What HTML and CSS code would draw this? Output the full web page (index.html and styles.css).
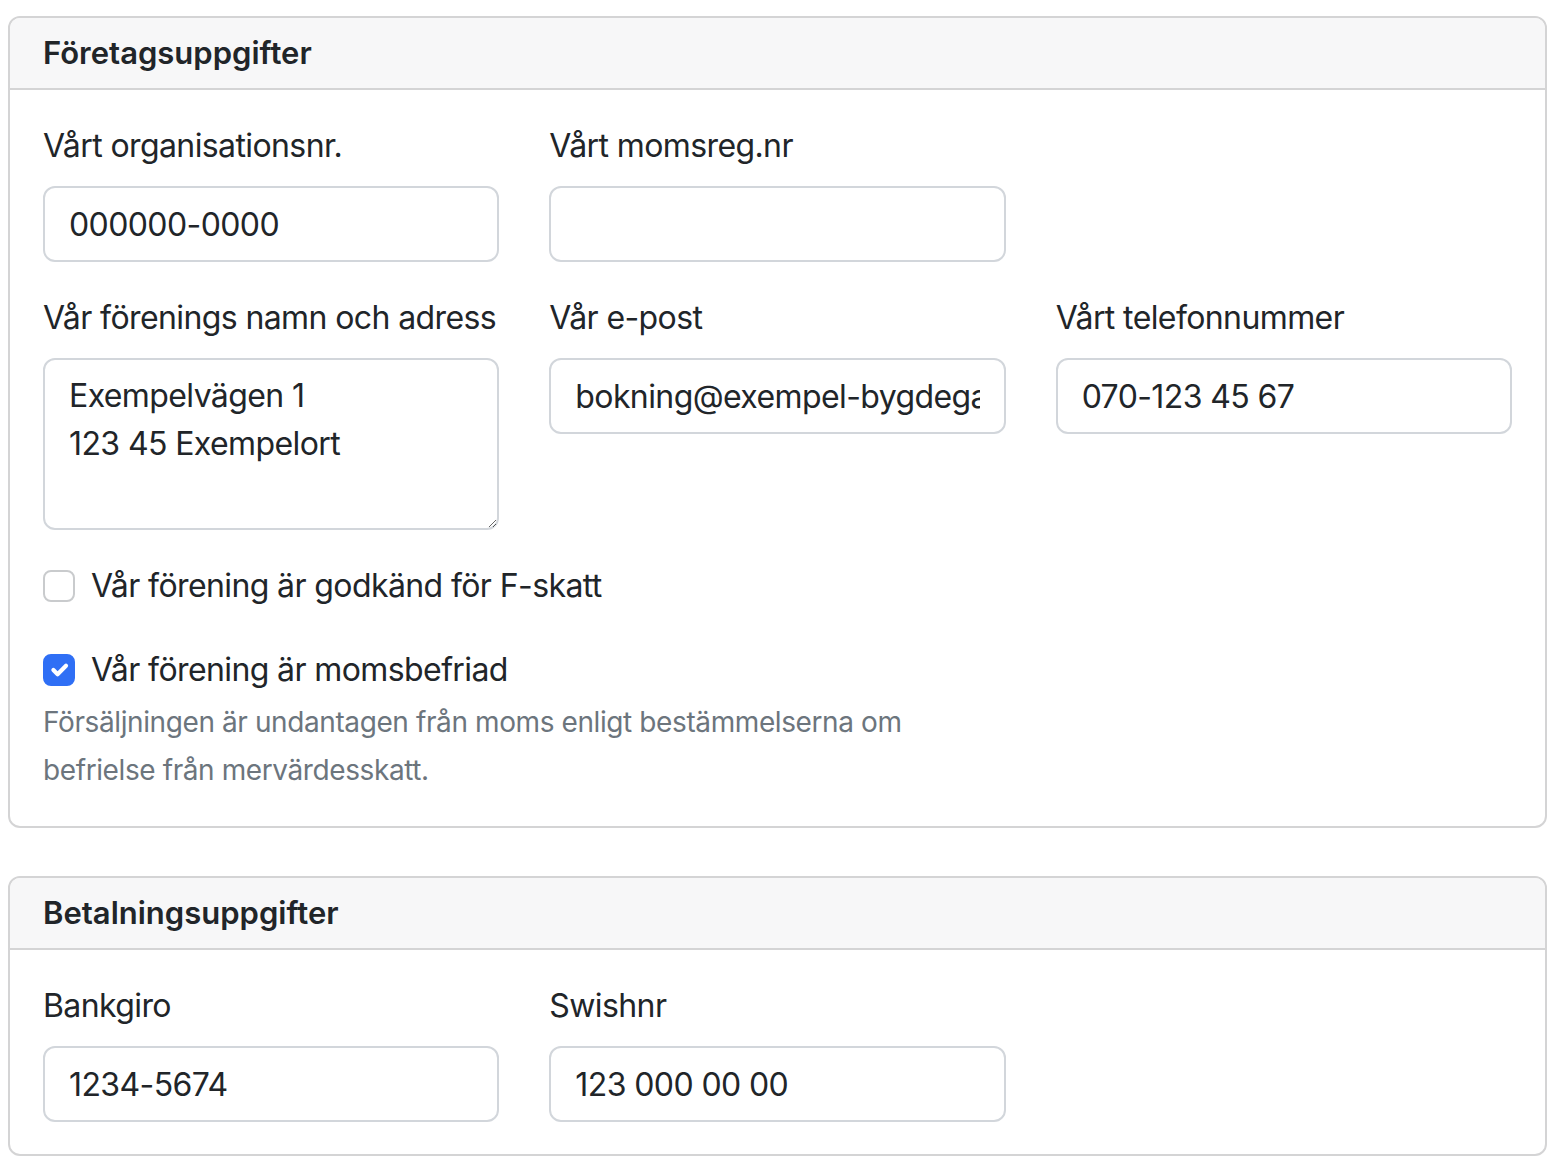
FILE: index.html
```html
<!DOCTYPE html>
<html lang="sv">
<head>
<meta charset="utf-8">
<title>Inställningar</title>
<link rel="stylesheet" href="styles.css">
</head>
<body>
<div class="page">
  <section class="card">
    <header class="card-header">Företagsuppgifter</header>
    <div class="card-body">
      <div class="row">
        <div class="field">
          <label class="label" for="orgnr">Vårt organisationsnr.</label>
          <input class="control" id="orgnr" type="text" value="000000-0000">
        </div>
        <div class="field">
          <label class="label" for="moms">Vårt momsreg.nr</label>
          <input class="control" id="moms" type="text" value="">
        </div>
      </div>
      <div class="row">
        <div class="field">
          <label class="label" for="adr">Vår förenings namn och adress</label>
          <textarea class="control area" id="adr" rows="3">Exempelvägen 1
123 45 Exempelort</textarea>
        </div>
        <div class="field">
          <label class="label" for="mail">Vår e-post</label>
          <input class="control" id="mail" type="text" value="bokning@exempel-bygdegard.se">
        </div>
        <div class="field">
          <label class="label" for="tel">Vårt telefonnummer</label>
          <input class="control" id="tel" type="text" value="070-123 45 67">
        </div>
      </div>
      <div class="check check-first">
        <span class="box"></span>
        <span class="check-label">Vår förening är godkänd för F-skatt</span>
      </div>
      <div class="check">
        <span class="box checked">
          <svg viewBox="0 0 20 20" width="32" height="32" aria-hidden="true"><path d="M6 10l3 3 6-6" fill="none" stroke="#fff" stroke-width="3" stroke-linecap="round" stroke-linejoin="round"/></svg>
        </span>
        <span class="check-label">Vår förening är momsbefriad</span>
      </div>
      <p class="help">Försäljningen är undantagen från moms enligt bestämmelserna om befrielse från mervärdesskatt.</p>
    </div>
  </section>

  <section class="card">
    <header class="card-header">Betalningsuppgifter</header>
    <div class="card-body">
      <div class="row last">
        <div class="field">
          <label class="label" for="bg">Bankgiro</label>
          <input class="control" id="bg" type="text" value="1234-5674">
        </div>
        <div class="field">
          <label class="label" for="swish">Swishnr</label>
          <input class="control" id="swish" type="text" value="123 000 00 00">
        </div>
      </div>
    </div>
  </section>
</div>
</body>
</html>
```

FILE: styles.css
```css
* { box-sizing: border-box; }

html, body {
  margin: 0;
  padding: 0;
  background: #fff;
}

body {
  font-family: Inter, "Noto Sans", "Liberation Sans", sans-serif;
  font-size: 32px;
  line-height: 48px;
  letter-spacing: -0.6px;
  color: #212529;
}

.page {
  padding: 16px 9px 0 8px;
  display: flex;
  flex-direction: column;
  gap: 48px;
}

.card {
  border: 2px solid #d4d4d5;
  border-radius: 12px;
  overflow: hidden;
  background: #fff;
}

.card-header {
  background: #f7f7f8;
  border-bottom: 2px solid #d4d4d5;
  padding: 16px 33px;
  font-size: 31px;
  line-height: 38px;
  font-weight: 600;
  letter-spacing: 0;
}

.card-body {
  padding: 32px 33px;
}

.row {
  display: grid;
  grid-template-columns: repeat(3, 1fr);
  column-gap: 50px;
  margin-bottom: 32px;
}

.row.last { margin-bottom: 0; }

.field {
  display: flex;
  flex-direction: column;
}

.label {
  display: block;
  margin-bottom: 16px;
  padding-top: 2px;
  margin-top: -2px;
}

.control {
  display: block;
  width: 100%;
  height: 76px;
  padding: 12px 24px;
  font: inherit;
  letter-spacing: -0.6px;
  color: #212529;
  background: #fff;
  border: 2px solid #d2d6db;
  border-radius: 12px;
  outline: none;
  margin: 0;
}

.area {
  height: 172px;
  resize: vertical;
}

.check {
  display: flex;
  align-items: flex-start;
  gap: 16px;
  min-height: 48px;
  margin-bottom: 4px;
}

.check-first {
  margin-bottom: 36px;
}

.box {
  flex: none;
  width: 32px;
  height: 32px;
  margin-top: 8px;
  border: 2px solid #c9cbcd;
  border-radius: 8px;
  background: #fff;
}

.box.checked {
  background: #2f6ff5;
  border-color: #2f6ff5;
  display: flex;
  align-items: center;
  justify-content: center;
}

.box.checked svg {
  width: 28px;
  height: 28px;
}

.help {
  margin: 1px 0 0;
  max-width: 962px;
  font-size: 28px;
  line-height: 48px;
  letter-spacing: -0.4px;
  color: #6c757d;
}
```
